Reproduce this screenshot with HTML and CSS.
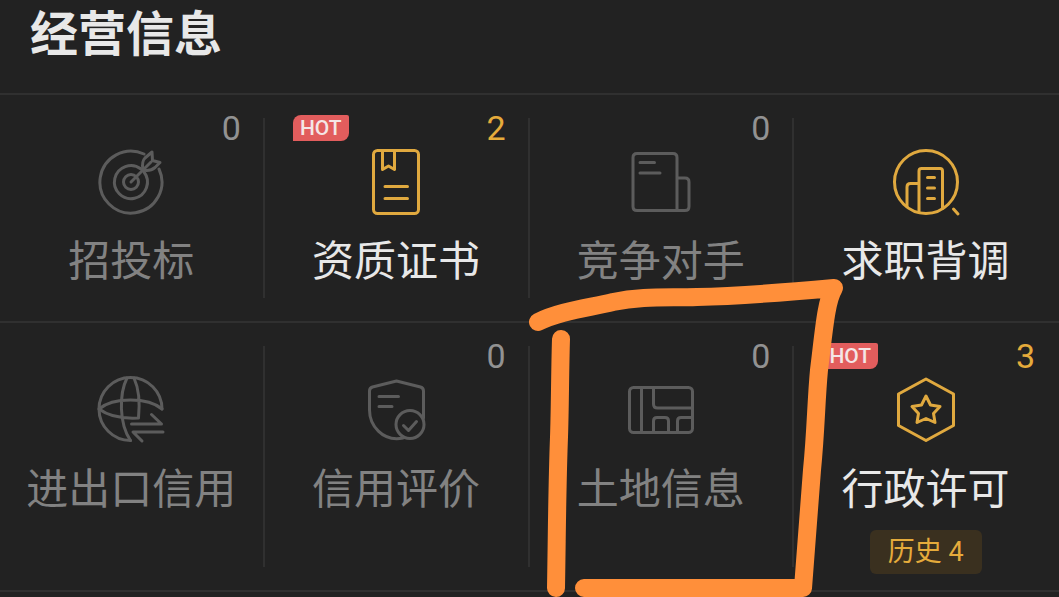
FILE: index.html
```
<!DOCTYPE html>
<html lang="zh-CN">
<head>
  <meta charset="UTF-8">
  <meta name="viewport" content="width=device-width, initial-scale=1.0">
  <title>经营信息</title>
  <link rel="stylesheet" href="styles.css">
</head>
<body>

  <main class="board">
    <header class="board-header">
      <h1>经营信息</h1>
    </header>

    <nav class="grid">
      <a class="item" href="#bidding">
        <span class="item-top"><span class="count">0</span></span>
        <svg class="icon" viewBox="0 0 72 72" aria-hidden="true">
          <path d="M49 8A31 31 0 1 0 64 23"/>
          <path d="M46 23A16.500 16.500 0 1 0 49 26"/>
          <circle cx="36" cy="36" r="7.500"/>
          <path d="M36 36L56 16M48 24C47 19 48 14 50 12L57 6L57.500 14.500L65 16.500L60 21.500C57 24 53 25 48 24Z"/>
        </svg>
        <span class="label">招投标</span>
      </a>

      <a class="item active" href="#certificates">
        <span class="item-top"><span class="hot">HOT</span><span class="count">2</span></span>
        <svg class="icon" viewBox="0 0 72 72" aria-hidden="true">
          <rect x="13.500" y="4.500" width="45" height="63" rx="4"/>
          <path d="M22.500 5V23.500L28.500 20L34.500 23.500V5M25 40.500H47.500M25 52.500H47.500"/>
        </svg>
        <span class="label">资质证书</span>
      </a>

      <a class="item" href="#competitors">
        <span class="item-top"><span class="count">0</span></span>
        <svg class="icon" viewBox="0 0 72 72" aria-hidden="true">
          <path d="M52 64.500V11.500Q52 7.500 48 7.500H12Q8 7.500 8 11.500V60.500Q8 64.500 12 64.500H60Q64 64.500 64 60.500V36Q64 32 60 32H52M15 16.500H29.500M15 27H35"/>
        </svg>
        <span class="label">竞争对手</span>
      </a>

      <a class="item active" href="#background">
        <span class="item-top"></span>
        <svg class="icon" viewBox="0 0 72 72" aria-hidden="true">
          <circle cx="36" cy="36" r="31.500"/>
          <path d="M29 66V25Q29 22.500 31.500 22.500H50Q52.500 22.500 52.500 25V62.500M29 37.500H20.500Q17 37.500 17 41V60.500M37.500 31.500H44.500M37.500 42H44.500M37.500 52.500H44.500M63.500 63L68 68"/>
        </svg>
        <span class="label">求职背调</span>
      </a>

      <a class="item" href="#trade-credit">
        <span class="item-top"></span>
        <svg class="icon" viewBox="0 0 72 72" aria-hidden="true">
          <path d="M67 35A31.500 31.500 0 1 0 35.500 66.500"/>
          <path d="M35.500 66.500C24 50 24 20 32 4M39 4C44 15 45 29 43.500 44C25 45 12 41 4 35C18 23 53 23 67 35"/>
          <path d="M36.500 50H66.500L56.500 40.500M68 58H38L47 67"/>
        </svg>
        <span class="label">进出口信用</span>
      </a>

      <a class="item" href="#credit-rating">
        <span class="item-top"><span class="count">0</span></span>
        <svg class="icon" viewBox="0 0 72 72" aria-hidden="true">
          <path d="M63.500 44V17Q63.500 14 60.500 13L36.500 7L12.500 13Q9.500 14 9.500 17V36C9.500 51 22 68 43 64"/>
          <path d="M19 22.500H38.500M19 32.500H32"/>
          <circle cx="50" cy="50.500" r="14"/>
          <path d="M43.500 51.500L48.500 56.500L56.500 47.500"/>
        </svg>
        <span class="label">信用评价</span>
      </a>

      <a class="item" href="#land">
        <span class="item-top"><span class="count">0</span></span>
        <svg class="icon" viewBox="0 0 72 72" aria-hidden="true">
          <rect x="4.500" y="13.500" width="63" height="45" rx="4"/>
          <path d="M16.500 13.500V58.500M28.500 13.500V30Q28.500 34 32.500 34H67.500M28.500 58.500V47Q28.500 43.500 32 43.500H40Q43.500 43.500 43.500 47V58.500M52.500 58.500V47Q52.500 43.500 56 43.500H67.500"/>
        </svg>
        <span class="label">土地信息</span>
      </a>

      <a class="item active" href="#licences">
        <span class="item-top"><span class="hot">HOT</span><span class="count">3</span></span>
        <svg class="icon" viewBox="0 0 72 72" aria-hidden="true">
          <path d="M36 5L63.500 20V51.500L36 66.500L8.500 51.500V20Z"/>
          <path d="M36 22L40.500 31L50 32.500L43.500 39.500L45 48.500L36 44.500L27 48.500L28.500 39.500L22 32.500L31.500 31Z"/>
        </svg>
        <span class="label">行政许可</span>
        <span class="history">历史 4</span>
      </a>
    </nav>

    <!-- Hand-drawn marker around the land item -->
    <svg class="marker" viewBox="0 0 1059 597" aria-hidden="true">
      <path d="M538 322C560 311 588 308 613 302C642 296 668 298 697 297C745 296 790 292 834 288C826 301 824 330 819 370C816 402 816 430 812 470L803 588H584"/>
      <path d="M561 339C560 370 560 410 559 437C557 490 557 530 556 588"/>
    </svg>
  </main>

</body>
</html>
```
FILE: styles.css
```
* {
  box-sizing: border-box;
}

body {
  margin: 0;
  background: #222222;
  color: #e8e8e8;
  font-family: Roboto, 'Noto Sans CJK SC', sans-serif;
}

.board {
  position: relative;
  min-height: 100vh;
  overflow: hidden;
}

.board-header {
  padding: 5px 30px 28px;
  border-bottom: 2px solid #303030;
}

h1 {
  margin: 0;
  font-size: 48px;
  line-height: 60px;
  font-weight: 700;
}

.grid {
  display: grid;
  grid-template-columns: repeat(4, 1fr);
}

/* The column divider is shorter than the cell, so it is a background */
.item {
  display: flex;
  flex-direction: column;
  align-items: center;
  min-height: 228px;
  padding: 16px 2px 16px 0;
  border-bottom: 2px solid #303030;
  background: linear-gradient(#303030, #303030) right center / 2px calc(100% - 46px) no-repeat;
  color: #828282;
  text-decoration: none;
}

.item:nth-child(4n) {
  background: none;
}

.item-top {
  display: flex;
  align-items: center;
  width: 100%;
  height: 33px;
  margin-bottom: 2px;
  padding: 0 22px 0 28px;
}

.count {
  margin-left: auto;
  font-size: 34px;
  line-height: 32px;
  font-weight: 400;
  color: #929292;
}

.hot {
  width: 56px;
  border-radius: 8px 2px 8px 0;
  background: #e25d5d;
  color: #f4e6e6;
  font-size: 21px;
  line-height: 26px;
  font-weight: 500;
  text-align: center;
}

.icon {
  width: 72px;
  height: 72px;
  fill: none;
  stroke: #5c5c5c;
  stroke-width: 3;
  stroke-linecap: round;
  stroke-linejoin: round;
}

.label {
  margin-top: 16px;
  font-size: 42px;
  line-height: 56px;
  white-space: nowrap;
}

.active {
  color: #e8e8e8;
}

.active .count {
  color: #e5ab3b;
}

.active .icon {
  stroke: #e0a93f;
}

.history {
  margin-top: 12px;
  padding: 0 18px;
  border-radius: 6px;
  background: #3a301f;
  color: #e5ab3b;
  font-size: 27px;
  line-height: 44px;
}

.marker {
  position: absolute;
  top: 0;
  left: 0;
  width: 100%;
  fill: none;
  stroke: #ff8f3a;
  stroke-width: 18;
  stroke-linecap: round;
  stroke-linejoin: round;
  pointer-events: none;
}
```
